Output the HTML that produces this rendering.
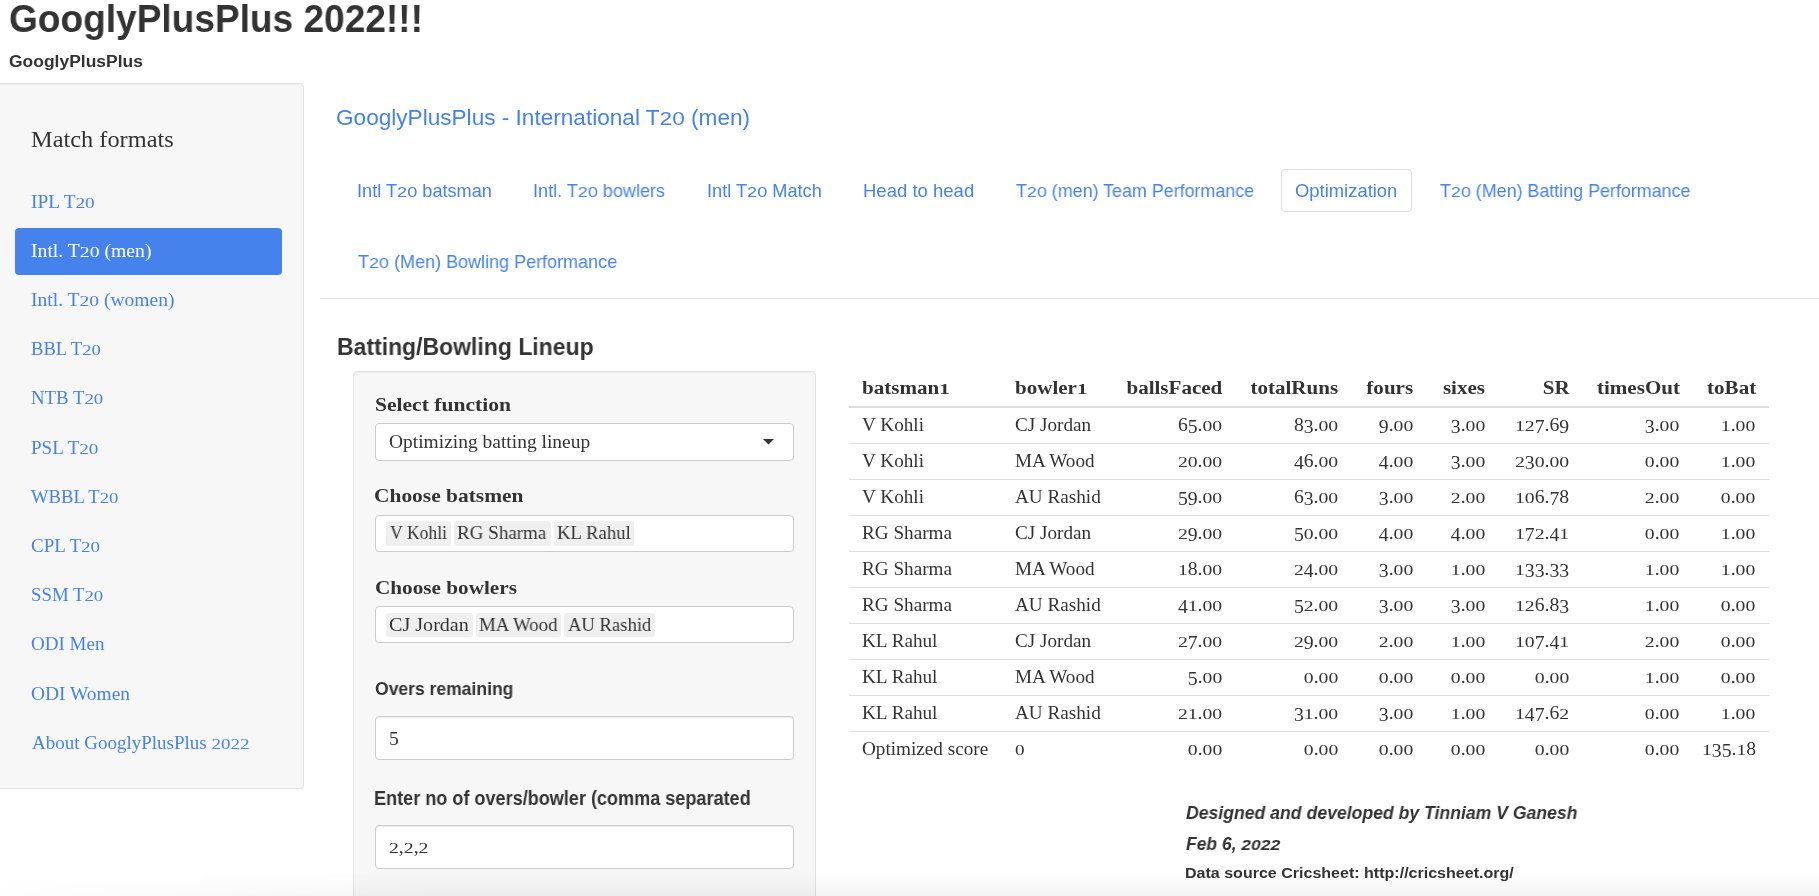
<!DOCTYPE html>
<html>
<head>
<meta charset="utf-8">
<title>GooglyPlusPlus 2022</title>
<style>
html,body{margin:0;padding:0;}
body{width:1819px;height:896px;overflow:hidden;position:relative;background:#fff;color:#333;font-family:"Liberation Serif",serif;}
.a{position:absolute;white-space:nowrap;}
.t{position:absolute;white-space:nowrap;transform-origin:0 0;line-height:1;will-change:transform;}
.r{position:absolute;white-space:nowrap;transform-origin:100% 0;line-height:1;text-align:right;will-change:transform;}
.well{position:absolute;background:#f7f7f7;border:1px solid #e3e3e3;border-radius:4px;box-shadow:inset 0 1px 1px rgba(0,0,0,.05);}
.box{position:absolute;background:#fff;border:1px solid #cccccc;border-radius:4px;box-shadow:inset 0 1px 1px rgba(0,0,0,.075);}
.chip{position:absolute;background:#efefef;border-radius:3px;}
.ox{display:inline-block;transform:scaleY(.8);transform-origin:50% 84%}
.oxs{display:inline-block;transform:scaleY(.8);transform-origin:50% 85%}
.od{display:inline-block;transform:translateY(.13em)}
.rl{position:absolute;left:849px;width:920px;height:1px;background:#dddddd;}
</style>
</head>
<body>

<div class="well" style="left:-6px;top:83px;width:308px;height:704px"></div>
<div class="a" style="left:15px;top:228px;width:267px;height:47px;background:#4582ec;border-radius:4px"></div>
<div class="a" style="left:1281px;top:169px;width:129px;height:41px;border:1px solid #dddddd;border-radius:4px"></div>
<div class="a" style="left:320px;top:298px;width:1499px;height:1px;background:#dddddd"></div>
<div class="well" style="left:353px;top:371px;width:461px;height:600px"></div>
<div class="box" style="left:375px;top:423px;width:417px;height:36px;box-shadow:none"></div>
<svg class="a" style="left:763px;top:439px" width="11" height="6" viewBox="0 0 11 6"><path d="M0 0H11L5.5 5.5Z" fill="#333"/></svg>
<div class="box" style="left:375px;top:515px;width:417px;height:35px;box-shadow:none"></div>
<div class="chip" style="left:386px;top:521px;width:65px;height:25px"></div>
<div class="chip" style="left:454px;top:521px;width:97px;height:25px"></div>
<div class="chip" style="left:554px;top:521px;width:80px;height:25px"></div>
<div class="box" style="left:375px;top:606px;width:417px;height:35px;box-shadow:none"></div>
<div class="chip" style="left:386px;top:613px;width:87px;height:24px"></div>
<div class="chip" style="left:476px;top:613px;width:85px;height:24px"></div>
<div class="chip" style="left:564px;top:613px;width:91px;height:24px"></div>
<div class="box" style="left:375px;top:716px;width:417px;height:42px"></div>
<div class="box" style="left:375px;top:825px;width:417px;height:42px"></div>
<div class="rl" style="top:406px;height:2px"></div>
<div class="rl" style="top:443px"></div>
<div class="rl" style="top:479px"></div>
<div class="rl" style="top:515px"></div>
<div class="rl" style="top:551px"></div>
<div class="rl" style="top:587px"></div>
<div class="rl" style="top:623px"></div>
<div class="rl" style="top:659px"></div>
<div class="rl" style="top:695px"></div>
<div class="rl" style="top:731px"></div>
<div class="t" id="title" style="left:9.10px;top:-1.01px;font-size:39.24px;font-family:'Liberation Sans',sans-serif;color:#333333;font-weight:bold;transform:scaleX(0.9446)">GooglyPlusPlus 2022!!!</div>
<div class="t" id="sub" style="left:9.10px;top:53.31px;font-size:16.42px;font-family:'Liberation Sans',sans-serif;color:#333333;font-weight:bold;transform:scaleX(1.0645)">GooglyPlusPlus</div>
<div class="t" id="mf" style="left:31.10px;top:127.81px;font-size:23.06px;font-family:'Liberation Serif',serif;color:#333333;transform:scaleX(1.0571)">Match formats</div>
<div class="t" id="nav0" style="left:31.13px;top:193.60px;font-size:17.87px;font-family:'Liberation Serif',serif;color:#4582ec;transform:scaleX(1.0796)">IPL T<span class="ox">2</span><span class="ox">0</span></div>
<div class="t" id="nav1" style="left:31.13px;top:242.80px;font-size:17.87px;font-family:'Liberation Serif',serif;color:#ffffff;transform:scaleX(1.1020)">Intl. T<span class="ox">2</span><span class="ox">0</span> (men)</div>
<div class="t" id="nav2" style="left:31.13px;top:292.01px;font-size:17.87px;font-family:'Liberation Serif',serif;color:#4582ec;transform:scaleX(1.0939)">Intl. T<span class="ox">2</span><span class="ox">0</span> (women)</div>
<div class="t" id="nav3" style="left:31.13px;top:341.21px;font-size:17.87px;font-family:'Liberation Serif',serif;color:#4582ec;transform:scaleX(1.0433)">BBL T<span class="ox">2</span><span class="ox">0</span></div>
<div class="t" id="nav4" style="left:31.13px;top:390.41px;font-size:17.87px;font-family:'Liberation Serif',serif;color:#4582ec;transform:scaleX(1.0527)">NTB T<span class="ox">2</span><span class="ox">0</span></div>
<div class="t" id="nav5" style="left:31.13px;top:439.60px;font-size:17.87px;font-family:'Liberation Serif',serif;color:#4582ec;transform:scaleX(1.0693)">PSL T<span class="ox">2</span><span class="ox">0</span></div>
<div class="t" id="nav6" style="left:31.13px;top:488.80px;font-size:17.87px;font-family:'Liberation Serif',serif;color:#4582ec;transform:scaleX(1.0417)">WBBL T<span class="ox">2</span><span class="ox">0</span></div>
<div class="t" id="nav7" style="left:31.13px;top:538.01px;font-size:17.87px;font-family:'Liberation Serif',serif;color:#4582ec;transform:scaleX(1.0627)">CPL T<span class="ox">2</span><span class="ox">0</span></div>
<div class="t" id="nav8" style="left:31.13px;top:587.21px;font-size:17.87px;font-family:'Liberation Serif',serif;color:#4582ec;transform:scaleX(1.0525)">SSM T<span class="ox">2</span><span class="ox">0</span></div>
<div class="t" id="nav9" style="left:31.13px;top:636.41px;font-size:17.87px;font-family:'Liberation Serif',serif;color:#4582ec;transform:scaleX(1.0646)">ODI Men</div>
<div class="t" id="nav10" style="left:31.13px;top:685.60px;font-size:17.87px;font-family:'Liberation Serif',serif;color:#4582ec;transform:scaleX(1.0879)">ODI Women</div>
<div class="t" id="nav11" style="left:32.03px;top:734.80px;font-size:17.87px;font-family:'Liberation Serif',serif;color:#4582ec;transform:scaleX(1.0634)">About GooglyPlusPlus <span class="ox">2</span><span class="ox">0</span><span class="ox">2</span><span class="ox">2</span></div>
<div class="t" id="h3" style="left:336.14px;top:106.70px;font-size:22.09px;font-family:'Liberation Sans',sans-serif;color:#4582ec;transform:scaleX(1.0234)">GooglyPlusPlus - International T<span class="oxs">2</span><span class="oxs">0</span> (men)</div>
<div class="t" id="tab0" style="left:357.16px;top:182.00px;font-size:18.17px;font-family:'Liberation Sans',sans-serif;color:#4582ec">Intl T<span class="oxs">2</span><span class="oxs">0</span> batsman</div>
<div class="t" id="tab1" style="left:533.09px;top:182.00px;font-size:18.17px;font-family:'Liberation Sans',sans-serif;color:#4582ec;transform:scaleX(0.9932)">Intl. T<span class="oxs">2</span><span class="oxs">0</span> bowlers</div>
<div class="t" id="tab2" style="left:707.08px;top:182.00px;font-size:18.17px;font-family:'Liberation Sans',sans-serif;color:#4582ec;transform:scaleX(0.9966)">Intl T<span class="oxs">2</span><span class="oxs">0</span> Match</div>
<div class="t" id="tab3" style="left:863.07px;top:182.00px;font-size:18.17px;font-family:'Liberation Sans',sans-serif;color:#4582ec;transform:scaleX(1.0198)">Head to head</div>
<div class="t" id="tab4" style="left:1015.98px;top:182.00px;font-size:18.17px;font-family:'Liberation Sans',sans-serif;color:#4582ec;transform:scaleX(0.9846)">T<span class="oxs">2</span><span class="oxs">0</span> (men) Team Performance</div>
<div class="t" id="tab5" style="left:1295.14px;top:182.00px;font-size:18.17px;font-family:'Liberation Sans',sans-serif;color:#4582ec;transform:scaleX(1.0142)">Optimization</div>
<div class="t" id="tab6" style="left:1440.03px;top:182.00px;font-size:18.17px;font-family:'Liberation Sans',sans-serif;color:#4582ec;transform:scaleX(0.9846)">T<span class="oxs">2</span><span class="oxs">0</span> (Men) Batting Performance</div>
<div class="t" id="tab7" style="left:358.00px;top:252.90px;font-size:18.46px;font-family:'Liberation Sans',sans-serif;color:#4582ec;transform:scaleX(0.9760)">T<span class="oxs">2</span><span class="oxs">0</span> (Men) Bowling Performance</div>
<div class="t" id="lineup" style="left:337.10px;top:336.40px;font-size:23.26px;font-family:'Liberation Sans',sans-serif;color:#333333;font-weight:bold;transform:scaleX(0.9884)">Batting/Bowling Lineup</div>
<div class="t" id="lbl0" style="left:375.07px;top:396.00px;font-size:18.33px;font-family:'Liberation Serif',serif;color:#333333;font-weight:bold;transform:scaleX(1.1762)">Select function</div>
<div class="t" id="sel" style="left:389.09px;top:432.10px;font-size:19.24px;font-family:'Liberation Serif',serif;color:#333333;transform:scaleX(1.0122)">Optimizing batting lineup</div>
<div class="t" id="lbl1" style="left:374.15px;top:487.31px;font-size:18.78px;font-family:'Liberation Serif',serif;color:#333333;font-weight:bold;transform:scaleX(1.1420)">Choose batsmen</div>
<div class="t" id="c0" style="left:390.00px;top:523.01px;font-size:19.55px;font-family:'Liberation Serif',serif;color:#333333;transform:scaleX(0.9028)">V Kohli</div>
<div class="t" id="c1" style="left:457.12px;top:523.01px;font-size:19.55px;font-family:'Liberation Serif',serif;color:#333333;transform:scaleX(0.9735)">RG Sharma</div>
<div class="t" id="c2" style="left:557.11px;top:523.01px;font-size:19.55px;font-family:'Liberation Serif',serif;color:#333333;transform:scaleX(0.9588)">KL Rahul</div>
<div class="t" id="lbl2" style="left:375.08px;top:578.41px;font-size:19.70px;font-family:'Liberation Serif',serif;color:#333333;font-weight:bold;transform:scaleX(1.0770)">Choose bowlers</div>
<div class="t" id="c3" style="left:389.08px;top:615.01px;font-size:19.55px;font-family:'Liberation Serif',serif;color:#333333;transform:scaleX(1.0292)">CJ Jordan</div>
<div class="t" id="c4" style="left:479.07px;top:615.01px;font-size:19.55px;font-family:'Liberation Serif',serif;color:#333333;transform:scaleX(0.9695)">MA Wood</div>
<div class="t" id="c5" style="left:567.99px;top:615.01px;font-size:19.55px;font-family:'Liberation Serif',serif;color:#333333;transform:scaleX(0.9536)">AU Rashid</div>
<div class="t" id="lbl3" style="left:375.08px;top:681.11px;font-size:17.88px;font-family:'Liberation Sans',sans-serif;color:#333333;font-weight:bold;transform:scaleX(0.9815)">Overs remaining</div>
<div class="t" id="lbl4" style="left:374.14px;top:788.71px;font-size:19.91px;font-family:'Liberation Sans',sans-serif;color:#333333;font-weight:bold;transform:scaleX(0.9080)">Enter no of overs/bowler (comma separated</div>
<div class="t" id="foot0" style="left:1186.04px;top:803.80px;font-size:18.02px;font-family:'Liberation Sans',sans-serif;color:#333333;font-weight:bold;font-style:italic;transform:scaleX(0.9785)">Designed and developed by Tinniam V Ganesh</div>
<div class="t" id="foot1" style="left:1186.04px;top:835.72px;font-size:17.88px;font-family:'Liberation Sans',sans-serif;color:#333333;font-weight:bold;font-style:italic;transform:scaleX(0.9773)">Feb 6, <span class="oxs">2</span><span class="oxs">0</span><span class="oxs">2</span><span class="oxs">2</span></div>
<div class="t" id="foot2" style="left:1185.08px;top:864.51px;font-size:15.12px;font-family:'Liberation Sans',sans-serif;color:#333333;font-weight:bold;transform:scaleX(1.0610)">Data source Cricsheet: http://cricsheet.org/</div>
<div class="t" style="left:389px;top:729.31px;font-size:17.86px;transform:scaleX(1.1022)"><span class="od">5</span></div>
<div class="t" style="left:389px;top:838.91px;font-size:17.86px;transform:scaleX(1.1022)"><span class="ox">2</span>,<span class="ox">2</span>,<span class="ox">2</span></div>
<div class="t" id="th0" style="left:861.63px;top:379.20px;font-size:18.50px;font-weight:bold;transform:scaleX(1.1371)">batsman<span class="ox">1</span></div>
<div class="t" id="th1" style="left:1014.53px;top:379.20px;font-size:18.50px;font-weight:bold;transform:scaleX(1.1371)">bowler<span class="ox">1</span></div>
<div class="r" id="th2" style="right:596.90px;top:379.20px;font-size:18.50px;font-weight:bold;transform:scaleX(1.1371)">ballsFaced</div>
<div class="r" id="th3" style="right:481.00px;top:379.20px;font-size:18.50px;font-weight:bold;transform:scaleX(1.1371)">totalRuns</div>
<div class="r" id="th4" style="right:405.60px;top:379.20px;font-size:18.50px;font-weight:bold;transform:scaleX(1.1371)">fours</div>
<div class="r" id="th5" style="right:334.00px;top:379.20px;font-size:18.50px;font-weight:bold;transform:scaleX(1.1371)">sixes</div>
<div class="r" id="th6" style="right:249.50px;top:379.20px;font-size:18.50px;font-weight:bold;transform:scaleX(1.1371)">SR</div>
<div class="r" id="th7" style="right:139.50px;top:379.20px;font-size:18.50px;font-weight:bold;transform:scaleX(1.1371)">timesOut</div>
<div class="r" id="th8" style="right:63.30px;top:379.20px;font-size:18.50px;font-weight:bold;transform:scaleX(1.1371)">toBat</div>
<div class="t" id="tc0_0" style="left:861.63px;top:416.81px;font-size:17.86px;transform:scaleX(1.0736)">V Kohli</div>
<div class="t" id="tc0_1" style="left:1014.53px;top:416.81px;font-size:17.86px;transform:scaleX(1.0736)">CJ Jordan</div>
<div class="r" id="tc0_2" style="right:596.90px;top:416.81px;font-size:17.86px;transform:scaleX(1.1022)">6<span class="od">5</span>.<span class="ox">0</span><span class="ox">0</span></div>
<div class="r" id="tc0_3" style="right:481.00px;top:416.81px;font-size:17.86px;transform:scaleX(1.1022)">8<span class="od">3</span>.<span class="ox">0</span><span class="ox">0</span></div>
<div class="r" id="tc0_4" style="right:405.60px;top:416.81px;font-size:17.86px;transform:scaleX(1.1022)"><span class="od">9</span>.<span class="ox">0</span><span class="ox">0</span></div>
<div class="r" id="tc0_5" style="right:334.00px;top:416.81px;font-size:17.86px;transform:scaleX(1.1022)"><span class="od">3</span>.<span class="ox">0</span><span class="ox">0</span></div>
<div class="r" id="tc0_6" style="right:249.50px;top:416.81px;font-size:17.86px;transform:scaleX(1.1022)"><span class="ox">1</span><span class="ox">2</span><span class="od">7</span>.6<span class="od">9</span></div>
<div class="r" id="tc0_7" style="right:139.50px;top:416.81px;font-size:17.86px;transform:scaleX(1.1022)"><span class="od">3</span>.<span class="ox">0</span><span class="ox">0</span></div>
<div class="r" id="tc0_8" style="right:63.30px;top:416.81px;font-size:17.86px;transform:scaleX(1.1022)"><span class="ox">1</span>.<span class="ox">0</span><span class="ox">0</span></div>
<div class="t" id="tc1_0" style="left:861.63px;top:452.81px;font-size:17.86px;transform:scaleX(1.0736)">V Kohli</div>
<div class="t" id="tc1_1" style="left:1014.53px;top:452.81px;font-size:17.86px;transform:scaleX(1.0736)">MA Wood</div>
<div class="r" id="tc1_2" style="right:596.90px;top:452.81px;font-size:17.86px;transform:scaleX(1.1022)"><span class="ox">2</span><span class="ox">0</span>.<span class="ox">0</span><span class="ox">0</span></div>
<div class="r" id="tc1_3" style="right:481.00px;top:452.81px;font-size:17.86px;transform:scaleX(1.1022)"><span class="od">4</span>6.<span class="ox">0</span><span class="ox">0</span></div>
<div class="r" id="tc1_4" style="right:405.60px;top:452.81px;font-size:17.86px;transform:scaleX(1.1022)"><span class="od">4</span>.<span class="ox">0</span><span class="ox">0</span></div>
<div class="r" id="tc1_5" style="right:334.00px;top:452.81px;font-size:17.86px;transform:scaleX(1.1022)"><span class="od">3</span>.<span class="ox">0</span><span class="ox">0</span></div>
<div class="r" id="tc1_6" style="right:249.50px;top:452.81px;font-size:17.86px;transform:scaleX(1.1022)"><span class="ox">2</span><span class="od">3</span><span class="ox">0</span>.<span class="ox">0</span><span class="ox">0</span></div>
<div class="r" id="tc1_7" style="right:139.50px;top:452.81px;font-size:17.86px;transform:scaleX(1.1022)"><span class="ox">0</span>.<span class="ox">0</span><span class="ox">0</span></div>
<div class="r" id="tc1_8" style="right:63.30px;top:452.81px;font-size:17.86px;transform:scaleX(1.1022)"><span class="ox">1</span>.<span class="ox">0</span><span class="ox">0</span></div>
<div class="t" id="tc2_0" style="left:861.63px;top:488.81px;font-size:17.86px;transform:scaleX(1.0736)">V Kohli</div>
<div class="t" id="tc2_1" style="left:1014.53px;top:488.81px;font-size:17.86px;transform:scaleX(1.0736)">AU Rashid</div>
<div class="r" id="tc2_2" style="right:596.90px;top:488.81px;font-size:17.86px;transform:scaleX(1.1022)"><span class="od">5</span><span class="od">9</span>.<span class="ox">0</span><span class="ox">0</span></div>
<div class="r" id="tc2_3" style="right:481.00px;top:488.81px;font-size:17.86px;transform:scaleX(1.1022)">6<span class="od">3</span>.<span class="ox">0</span><span class="ox">0</span></div>
<div class="r" id="tc2_4" style="right:405.60px;top:488.81px;font-size:17.86px;transform:scaleX(1.1022)"><span class="od">3</span>.<span class="ox">0</span><span class="ox">0</span></div>
<div class="r" id="tc2_5" style="right:334.00px;top:488.81px;font-size:17.86px;transform:scaleX(1.1022)"><span class="ox">2</span>.<span class="ox">0</span><span class="ox">0</span></div>
<div class="r" id="tc2_6" style="right:249.50px;top:488.81px;font-size:17.86px;transform:scaleX(1.1022)"><span class="ox">1</span><span class="ox">0</span>6.<span class="od">7</span>8</div>
<div class="r" id="tc2_7" style="right:139.50px;top:488.81px;font-size:17.86px;transform:scaleX(1.1022)"><span class="ox">2</span>.<span class="ox">0</span><span class="ox">0</span></div>
<div class="r" id="tc2_8" style="right:63.30px;top:488.81px;font-size:17.86px;transform:scaleX(1.1022)"><span class="ox">0</span>.<span class="ox">0</span><span class="ox">0</span></div>
<div class="t" id="tc3_0" style="left:861.63px;top:524.81px;font-size:17.86px;transform:scaleX(1.0736)">RG Sharma</div>
<div class="t" id="tc3_1" style="left:1014.53px;top:524.81px;font-size:17.86px;transform:scaleX(1.0736)">CJ Jordan</div>
<div class="r" id="tc3_2" style="right:596.90px;top:524.81px;font-size:17.86px;transform:scaleX(1.1022)"><span class="ox">2</span><span class="od">9</span>.<span class="ox">0</span><span class="ox">0</span></div>
<div class="r" id="tc3_3" style="right:481.00px;top:524.81px;font-size:17.86px;transform:scaleX(1.1022)"><span class="od">5</span><span class="ox">0</span>.<span class="ox">0</span><span class="ox">0</span></div>
<div class="r" id="tc3_4" style="right:405.60px;top:524.81px;font-size:17.86px;transform:scaleX(1.1022)"><span class="od">4</span>.<span class="ox">0</span><span class="ox">0</span></div>
<div class="r" id="tc3_5" style="right:334.00px;top:524.81px;font-size:17.86px;transform:scaleX(1.1022)"><span class="od">4</span>.<span class="ox">0</span><span class="ox">0</span></div>
<div class="r" id="tc3_6" style="right:249.50px;top:524.81px;font-size:17.86px;transform:scaleX(1.1022)"><span class="ox">1</span><span class="od">7</span><span class="ox">2</span>.<span class="od">4</span><span class="ox">1</span></div>
<div class="r" id="tc3_7" style="right:139.50px;top:524.81px;font-size:17.86px;transform:scaleX(1.1022)"><span class="ox">0</span>.<span class="ox">0</span><span class="ox">0</span></div>
<div class="r" id="tc3_8" style="right:63.30px;top:524.81px;font-size:17.86px;transform:scaleX(1.1022)"><span class="ox">1</span>.<span class="ox">0</span><span class="ox">0</span></div>
<div class="t" id="tc4_0" style="left:861.63px;top:560.81px;font-size:17.86px;transform:scaleX(1.0736)">RG Sharma</div>
<div class="t" id="tc4_1" style="left:1014.53px;top:560.81px;font-size:17.86px;transform:scaleX(1.0736)">MA Wood</div>
<div class="r" id="tc4_2" style="right:596.90px;top:560.81px;font-size:17.86px;transform:scaleX(1.1022)"><span class="ox">1</span>8.<span class="ox">0</span><span class="ox">0</span></div>
<div class="r" id="tc4_3" style="right:481.00px;top:560.81px;font-size:17.86px;transform:scaleX(1.1022)"><span class="ox">2</span><span class="od">4</span>.<span class="ox">0</span><span class="ox">0</span></div>
<div class="r" id="tc4_4" style="right:405.60px;top:560.81px;font-size:17.86px;transform:scaleX(1.1022)"><span class="od">3</span>.<span class="ox">0</span><span class="ox">0</span></div>
<div class="r" id="tc4_5" style="right:334.00px;top:560.81px;font-size:17.86px;transform:scaleX(1.1022)"><span class="ox">1</span>.<span class="ox">0</span><span class="ox">0</span></div>
<div class="r" id="tc4_6" style="right:249.50px;top:560.81px;font-size:17.86px;transform:scaleX(1.1022)"><span class="ox">1</span><span class="od">3</span><span class="od">3</span>.<span class="od">3</span><span class="od">3</span></div>
<div class="r" id="tc4_7" style="right:139.50px;top:560.81px;font-size:17.86px;transform:scaleX(1.1022)"><span class="ox">1</span>.<span class="ox">0</span><span class="ox">0</span></div>
<div class="r" id="tc4_8" style="right:63.30px;top:560.81px;font-size:17.86px;transform:scaleX(1.1022)"><span class="ox">1</span>.<span class="ox">0</span><span class="ox">0</span></div>
<div class="t" id="tc5_0" style="left:861.63px;top:596.81px;font-size:17.86px;transform:scaleX(1.0736)">RG Sharma</div>
<div class="t" id="tc5_1" style="left:1014.53px;top:596.81px;font-size:17.86px;transform:scaleX(1.0736)">AU Rashid</div>
<div class="r" id="tc5_2" style="right:596.90px;top:596.81px;font-size:17.86px;transform:scaleX(1.1022)"><span class="od">4</span><span class="ox">1</span>.<span class="ox">0</span><span class="ox">0</span></div>
<div class="r" id="tc5_3" style="right:481.00px;top:596.81px;font-size:17.86px;transform:scaleX(1.1022)"><span class="od">5</span><span class="ox">2</span>.<span class="ox">0</span><span class="ox">0</span></div>
<div class="r" id="tc5_4" style="right:405.60px;top:596.81px;font-size:17.86px;transform:scaleX(1.1022)"><span class="od">3</span>.<span class="ox">0</span><span class="ox">0</span></div>
<div class="r" id="tc5_5" style="right:334.00px;top:596.81px;font-size:17.86px;transform:scaleX(1.1022)"><span class="od">3</span>.<span class="ox">0</span><span class="ox">0</span></div>
<div class="r" id="tc5_6" style="right:249.50px;top:596.81px;font-size:17.86px;transform:scaleX(1.1022)"><span class="ox">1</span><span class="ox">2</span>6.8<span class="od">3</span></div>
<div class="r" id="tc5_7" style="right:139.50px;top:596.81px;font-size:17.86px;transform:scaleX(1.1022)"><span class="ox">1</span>.<span class="ox">0</span><span class="ox">0</span></div>
<div class="r" id="tc5_8" style="right:63.30px;top:596.81px;font-size:17.86px;transform:scaleX(1.1022)"><span class="ox">0</span>.<span class="ox">0</span><span class="ox">0</span></div>
<div class="t" id="tc6_0" style="left:861.63px;top:632.81px;font-size:17.86px;transform:scaleX(1.0736)">KL Rahul</div>
<div class="t" id="tc6_1" style="left:1014.53px;top:632.81px;font-size:17.86px;transform:scaleX(1.0736)">CJ Jordan</div>
<div class="r" id="tc6_2" style="right:596.90px;top:632.81px;font-size:17.86px;transform:scaleX(1.1022)"><span class="ox">2</span><span class="od">7</span>.<span class="ox">0</span><span class="ox">0</span></div>
<div class="r" id="tc6_3" style="right:481.00px;top:632.81px;font-size:17.86px;transform:scaleX(1.1022)"><span class="ox">2</span><span class="od">9</span>.<span class="ox">0</span><span class="ox">0</span></div>
<div class="r" id="tc6_4" style="right:405.60px;top:632.81px;font-size:17.86px;transform:scaleX(1.1022)"><span class="ox">2</span>.<span class="ox">0</span><span class="ox">0</span></div>
<div class="r" id="tc6_5" style="right:334.00px;top:632.81px;font-size:17.86px;transform:scaleX(1.1022)"><span class="ox">1</span>.<span class="ox">0</span><span class="ox">0</span></div>
<div class="r" id="tc6_6" style="right:249.50px;top:632.81px;font-size:17.86px;transform:scaleX(1.1022)"><span class="ox">1</span><span class="ox">0</span><span class="od">7</span>.<span class="od">4</span><span class="ox">1</span></div>
<div class="r" id="tc6_7" style="right:139.50px;top:632.81px;font-size:17.86px;transform:scaleX(1.1022)"><span class="ox">2</span>.<span class="ox">0</span><span class="ox">0</span></div>
<div class="r" id="tc6_8" style="right:63.30px;top:632.81px;font-size:17.86px;transform:scaleX(1.1022)"><span class="ox">0</span>.<span class="ox">0</span><span class="ox">0</span></div>
<div class="t" id="tc7_0" style="left:861.63px;top:668.81px;font-size:17.86px;transform:scaleX(1.0736)">KL Rahul</div>
<div class="t" id="tc7_1" style="left:1014.53px;top:668.81px;font-size:17.86px;transform:scaleX(1.0736)">MA Wood</div>
<div class="r" id="tc7_2" style="right:596.90px;top:668.81px;font-size:17.86px;transform:scaleX(1.1022)"><span class="od">5</span>.<span class="ox">0</span><span class="ox">0</span></div>
<div class="r" id="tc7_3" style="right:481.00px;top:668.81px;font-size:17.86px;transform:scaleX(1.1022)"><span class="ox">0</span>.<span class="ox">0</span><span class="ox">0</span></div>
<div class="r" id="tc7_4" style="right:405.60px;top:668.81px;font-size:17.86px;transform:scaleX(1.1022)"><span class="ox">0</span>.<span class="ox">0</span><span class="ox">0</span></div>
<div class="r" id="tc7_5" style="right:334.00px;top:668.81px;font-size:17.86px;transform:scaleX(1.1022)"><span class="ox">0</span>.<span class="ox">0</span><span class="ox">0</span></div>
<div class="r" id="tc7_6" style="right:249.50px;top:668.81px;font-size:17.86px;transform:scaleX(1.1022)"><span class="ox">0</span>.<span class="ox">0</span><span class="ox">0</span></div>
<div class="r" id="tc7_7" style="right:139.50px;top:668.81px;font-size:17.86px;transform:scaleX(1.1022)"><span class="ox">1</span>.<span class="ox">0</span><span class="ox">0</span></div>
<div class="r" id="tc7_8" style="right:63.30px;top:668.81px;font-size:17.86px;transform:scaleX(1.1022)"><span class="ox">0</span>.<span class="ox">0</span><span class="ox">0</span></div>
<div class="t" id="tc8_0" style="left:861.63px;top:704.81px;font-size:17.86px;transform:scaleX(1.0736)">KL Rahul</div>
<div class="t" id="tc8_1" style="left:1014.53px;top:704.81px;font-size:17.86px;transform:scaleX(1.0736)">AU Rashid</div>
<div class="r" id="tc8_2" style="right:596.90px;top:704.81px;font-size:17.86px;transform:scaleX(1.1022)"><span class="ox">2</span><span class="ox">1</span>.<span class="ox">0</span><span class="ox">0</span></div>
<div class="r" id="tc8_3" style="right:481.00px;top:704.81px;font-size:17.86px;transform:scaleX(1.1022)"><span class="od">3</span><span class="ox">1</span>.<span class="ox">0</span><span class="ox">0</span></div>
<div class="r" id="tc8_4" style="right:405.60px;top:704.81px;font-size:17.86px;transform:scaleX(1.1022)"><span class="od">3</span>.<span class="ox">0</span><span class="ox">0</span></div>
<div class="r" id="tc8_5" style="right:334.00px;top:704.81px;font-size:17.86px;transform:scaleX(1.1022)"><span class="ox">1</span>.<span class="ox">0</span><span class="ox">0</span></div>
<div class="r" id="tc8_6" style="right:249.50px;top:704.81px;font-size:17.86px;transform:scaleX(1.1022)"><span class="ox">1</span><span class="od">4</span><span class="od">7</span>.6<span class="ox">2</span></div>
<div class="r" id="tc8_7" style="right:139.50px;top:704.81px;font-size:17.86px;transform:scaleX(1.1022)"><span class="ox">0</span>.<span class="ox">0</span><span class="ox">0</span></div>
<div class="r" id="tc8_8" style="right:63.30px;top:704.81px;font-size:17.86px;transform:scaleX(1.1022)"><span class="ox">1</span>.<span class="ox">0</span><span class="ox">0</span></div>
<div class="t" id="tc9_0" style="left:861.63px;top:740.81px;font-size:17.86px;transform:scaleX(1.0736)">Optimized score</div>
<div class="t" id="tc9_1" style="left:1014.53px;top:740.81px;font-size:17.86px;transform:scaleX(1.0736)"><span class="ox">0</span></div>
<div class="r" id="tc9_2" style="right:596.90px;top:740.81px;font-size:17.86px;transform:scaleX(1.1022)"><span class="ox">0</span>.<span class="ox">0</span><span class="ox">0</span></div>
<div class="r" id="tc9_3" style="right:481.00px;top:740.81px;font-size:17.86px;transform:scaleX(1.1022)"><span class="ox">0</span>.<span class="ox">0</span><span class="ox">0</span></div>
<div class="r" id="tc9_4" style="right:405.60px;top:740.81px;font-size:17.86px;transform:scaleX(1.1022)"><span class="ox">0</span>.<span class="ox">0</span><span class="ox">0</span></div>
<div class="r" id="tc9_5" style="right:334.00px;top:740.81px;font-size:17.86px;transform:scaleX(1.1022)"><span class="ox">0</span>.<span class="ox">0</span><span class="ox">0</span></div>
<div class="r" id="tc9_6" style="right:249.50px;top:740.81px;font-size:17.86px;transform:scaleX(1.1022)"><span class="ox">0</span>.<span class="ox">0</span><span class="ox">0</span></div>
<div class="r" id="tc9_7" style="right:139.50px;top:740.81px;font-size:17.86px;transform:scaleX(1.1022)"><span class="ox">0</span>.<span class="ox">0</span><span class="ox">0</span></div>
<div class="r" id="tc9_8" style="right:63.30px;top:740.81px;font-size:17.86px;transform:scaleX(1.1022)"><span class="ox">1</span><span class="od">3</span><span class="od">5</span>.<span class="ox">1</span>8</div>
<div class="a" style="left:0;top:872px;width:1819px;height:24px;background:linear-gradient(to bottom,rgba(0,0,0,0),rgba(0,0,0,.045));-webkit-mask-image:linear-gradient(to right,rgba(0,0,0,.1),#000 25%)"></div>
</body>
</html>
